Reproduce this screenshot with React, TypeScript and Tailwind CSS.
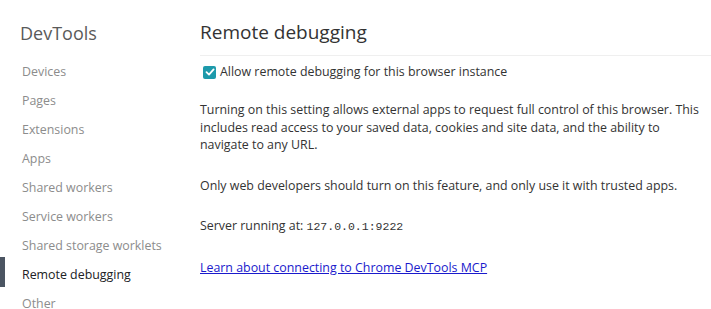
import React from 'react';

const navItems = [
  'Devices',
  'Pages',
  'Extensions',
  'Apps',
  'Shared workers',
  'Service workers',
  'Shared storage worklets',
  'Remote debugging',
  'Other',
];

const active = 'Remote debugging';

const Sidebar: React.FC = () => (
  <div className="w-[200px] shrink-0 pt-[19px]">
    <div className="pl-5 text-[18px] leading-[28px] text-[#5a5a5a]">DevTools</div>
    <ul className="mt-[11px]">
      {navItems.map((name) => (
        <li
          key={name}
          className={`relative h-[29px] flex items-center pl-[22px] text-[12.4px] ${
            name === active ? 'text-[#202124]' : 'text-[#8c8c8c]'
          }`}
        >
          {name === active && <span className="absolute left-0 top-[-4px] h-[30px] w-[5px] bg-[#4b5562]" />}
          {name}
        </li>
      ))}
    </ul>
  </div>
);

const RemoteDebugging: React.FC = () => (
  <div className="flex-1 pt-[18px] text-[12.4px] text-[#333]">
    <h1 className="text-[19px] leading-[28px] text-[#333]">Remote debugging</h1>
    <div className="mt-[9px] h-px bg-[#efefef]" />
    <label className="mt-[8px] flex items-center gap-[4px] leading-[16px]">
      <span className="ml-[3px] w-[13px] h-[13px] rounded-[2px] bg-[#1d9aab] flex items-center justify-center">
        <svg width="10" height="10" viewBox="0 0 10 10" fill="none">
          <path d="M1.5 5.2 L4 7.6 L8.6 2.4" stroke="white" strokeWidth="1.8" strokeLinecap="round" strokeLinejoin="round" />
        </svg>
      </span>
      Allow remote debugging for this browser instance
    </label>
    <div className="mt-[21px] flex flex-col gap-[23px] leading-[17.5px]">
      <p>
        Turning on this setting allows external apps to request full control of this browser. This
        <br />
        includes read access to your saved data, cookies and site data, and the ability to
        <br />
        navigate to any URL.
      </p>
      <p>Only web developers should turn on this feature, and only use it with trusted apps.</p>
      <p>
        Server running at: <span className="font-['Liberation_Mono',monospace] text-[11.5px]">127.0.0.1:9222</span>
      </p>
      <p>
        <a href="#" className="text-[#1a1acc] underline">
          Learn about connecting to Chrome DevTools MCP
        </a>
      </p>
    </div>
  </div>
);

export default function App() {
  return (
    <div className="w-[711px] h-[309px] overflow-hidden bg-white flex font-['Open_Sans',sans-serif]">
      <Sidebar />
      <RemoteDebugging />
    </div>
  );
}
